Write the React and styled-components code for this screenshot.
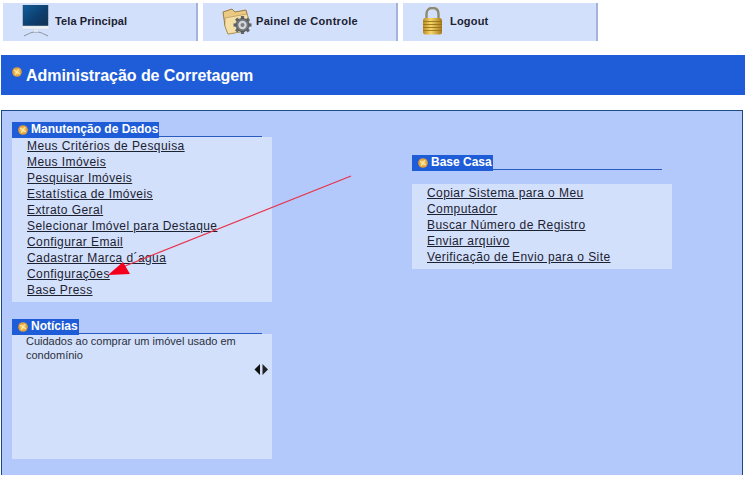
import React from 'react'
import styled, { createGlobalStyle } from 'styled-components'

const GlobalStyle = createGlobalStyle`
  html, body {
    margin: 0;
    padding: 0;
    background: #fff;
    font-family: "Liberation Sans", Arial, sans-serif;
  }
`

const Page = styled.div`
  position: relative;
  width: 747px;
  height: 477px;
  overflow: hidden;
  padding-top: 3px;
  box-sizing: border-box;
`

const Nav = styled.nav`
  display: flex;
  gap: 5px;
  padding-left: 3px;
  height: 38px;
`

const Tab = styled.a`
  display: flex;
  align-items: center;
  box-sizing: border-box;
  width: 195px;
  height: 38px;
  padding: 0 0 2px ${p => p.$pad}px;
  gap: ${p => p.$gap}px;
  background: #d3e0fb;
  border-right: 2px solid #a3b3dc;
  color: #1c2230;
  font-size: 11px;
  font-weight: bold;
  letter-spacing: ${p => p.$spacing || 0.2}px;
`

const Banner = styled.h1`
  display: flex;
  align-items: center;
  box-sizing: border-box;
  margin: 14px 0 0 1px;
  width: 744px;
  height: 40px;
  padding: 1px 0 0 11px;
  background: #1f5dd8;
  color: #fff;
  font-size: 16px;
  font-weight: bold;
  letter-spacing: -0.05px;
  gap: 4px;

  svg {
    margin-top: -7px;
  }
`

const Panel = styled.main`
  display: flex;
  box-sizing: border-box;
  margin: 15px 0 0 1px;
  width: 742px;
  height: 365px;
  padding: 10px 0 0 10px;
  gap: 140px;
  background: #b3c9fb;
  border: 1px solid #1b4a86;
  border-bottom: 0;
`

const Column = styled.div`
  width: 260px;
  padding-top: ${p => p.$top || 0}px;
`

const Section = styled.section`
  margin-bottom: 16px;
`

const Heading = styled.div`
  width: 250px;
  height: 16px;
  border-bottom: 1px solid #2a5bc0;
  box-sizing: border-box;
`

const HeadingLabel = styled.h2`
  display: inline-flex;
  align-items: center;
  gap: 3px;
  box-sizing: border-box;
  margin: 0;
  height: 16px;
  padding: 0 1px 2px 6px;
  background: #1f5dd8;
  color: #fff;
  font-size: 12px;
  font-weight: bold;
  white-space: nowrap;

  svg {
    margin-top: 2px;
  }
`

const Box = styled.div`
  box-sizing: border-box;
  width: 260px;
  height: ${p => p.$height}px;
  margin-top: ${p => p.$gap || 0}px;
  background: #d3e0fb;
`

const LinkList = styled.ul`
  list-style: none;
  margin: 0;
  padding: 1px 0 0 15px;
`

const Item = styled.li`
  height: 16px;
  line-height: 16px;
  font-size: 12px;
  letter-spacing: 0.42px;
  color: #1c2230;
  text-decoration: underline;
  white-space: nowrap;
`

const NewsBox = styled(Box)`
  display: flex;
  flex-direction: column;
  padding: 0 14px;
`

const NewsText = styled.p`
  margin: 0;
  font-size: 11px;
  line-height: 14px;
  color: #2a3040;
`

const Pager = styled.div`
  align-self: flex-end;
  margin: 2px -11px 0 0;
  height: 12px;
  line-height: 0;
`

const Annotation = styled.svg`
  position: absolute;
  left: 0;
  top: 0;
  pointer-events: none;
`

const Bullet = ({ size = 10 }) => (
  <svg width={size} height={size} viewBox="0 0 10 10">
    <circle cx="5" cy="5" r="4.8" fill="#e3a03c" />
    <circle cx="5" cy="5" r="2.8" fill="#f6c860" />
    <path d="M2 3 L8 7 M7 2 L3 8" stroke="#fff0b8" strokeWidth="0.9" />
  </svg>
)

const Monitor = () => (
  <svg width="28" height="32" viewBox="0 0 28 32">
    <defs>
      <linearGradient id="scr" x1="0" y1="0" x2="1" y2="1">
        <stop offset="0" stopColor="#0f5e9c" />
        <stop offset="0.55" stopColor="#0d3f70" />
        <stop offset="1" stopColor="#123050" />
      </linearGradient>
    </defs>
    <rect x="1" y="0" width="25" height="21" fill="url(#scr)" stroke="#2a4050" strokeWidth="0.5" />
    <rect x="0" y="21" width="27" height="3" fill="#eef2f6" stroke="#c8d0d8" strokeWidth="0.5" />
    <path d="M2 31 C8 28 10 27 14 27 C18 27 20 28 26 31" fill="none" stroke="#8a909c" strokeWidth="1" />
    <path d="M12 24 H16 V27 H12 Z" fill="#dfe5ea" />
  </svg>
)

const gearTeeth = [0, 45, 90, 135, 180, 225, 270, 315]

const FolderGear = () => (
  <svg width="31" height="27" viewBox="0 0 31 27">
    <path d="M1 4 L10 1 L13 4 L24 2 L27 13 L23 23 L6 26 L3 18 Z" fill="#ecc982" stroke="#8d7038" strokeWidth="0.9" />
    <path d="M3 10 L25 6 L27 13 L23 23 L6 26 L3 18 Z" fill="#f6dfa6" stroke="#a48a4c" strokeWidth="0.6" />
    <g transform="translate(20.5 17)">
      {gearTeeth.map(a => (
        <rect key={a} x="-1.6" y="-9" width="3.2" height="3.5" fill="#62666a" transform={`rotate(${a})`} />
      ))}
      <circle r="6.6" fill="#74787c" stroke="#44474c" strokeWidth="0.7" />
      <circle r="4.2" fill="#d4d7da" />
      <circle r="2" fill="#7c8084" />
    </g>
  </svg>
)

const Padlock = () => (
  <svg width="21" height="28" viewBox="0 0 21 28">
    <defs>
      <linearGradient id="brass" x1="0" y1="0" x2="1" y2="0">
        <stop offset="0" stopColor="#b98a22" />
        <stop offset="0.4" stopColor="#f6d668" />
        <stop offset="1" stopColor="#a87a1c" />
      </linearGradient>
    </defs>
    <path d="M4.5 13 V7 C4.5 3 7 1 10.5 1 C14 1 16.5 3 16.5 7 V13" fill="none" stroke="#8e8a70" strokeWidth="2.4" />
    <rect x="1" y="11" width="19" height="16.5" rx="2.5" fill="url(#brass)" />
    <path d="M1 14.5 H20 M1 17.5 H20 M1 20.5 H20 M1 23.5 H20" stroke="#9a7218" strokeWidth="0.9" />
  </svg>
)

const PagerArrows = () => (
  <svg width="15" height="12" viewBox="0 0 15 12">
    <path d="M6 0 V11 L0.5 5.5 Z" fill="#111" />
    <path d="M8.5 0 V11 L14 5.5 Z" fill="#222" />
  </svg>
)

const maintenanceLinks = [
  'Meus Critérios de Pesquisa',
  'Meus Imóveis',
  'Pesquisar Imóveis',
  'Estatística de Imóveis',
  'Extrato Geral',
  'Selecionar Imóvel para Destaque',
  'Configurar Email',
  'Cadastrar Marca d´agua',
  'Configurações',
  'Base Press',
]

const baseCasaLinks = [
  'Copiar Sistema para o Meu',
  'Computador',
  'Buscar Número de Registro',
  'Enviar arquivo',
  'Verificação de Envio para o Site',
]

const Title = ({ children }) => (
  <Heading>
    <HeadingLabel>
      <Bullet />
      {children}
    </HeadingLabel>
  </Heading>
)

const App = () => {
  return (
    <Page>
      <GlobalStyle />
      <Nav>
        <Tab $pad={19} $gap={5} $spacing={0.1}><Monitor />Tela Principal</Tab>
        <Tab $pad={19} $gap={3} $spacing={0.3}><FolderGear />Painel de Controle</Tab>
        <Tab $pad={19} $gap={7}><Padlock />Logout</Tab>
      </Nav>

      <Banner><Bullet />Administração de Corretagem</Banner>

      <Panel>
        <Column>
          <Section>
            <Title>Manutenção de Dados</Title>
            <Box $height={165}>
              <LinkList>
                {maintenanceLinks.map(l => <Item key={l}>{l}</Item>)}
              </LinkList>
            </Box>
          </Section>
          <Section>
            <Title>Notícias</Title>
            <NewsBox $height={125}>
              <NewsText>Cuidados ao comprar um imóvel usado em condomínio</NewsText>
              <Pager><PagerArrows /></Pager>
            </NewsBox>
          </Section>
        </Column>
        <Column $top={33}>
          <Title>Base Casa</Title>
          <Box $height={85} $gap={14}>
            <LinkList>
              {baseCasaLinks.map(l => <Item key={l}>{l}</Item>)}
            </LinkList>
          </Box>
        </Column>
      </Panel>

      <Annotation width="747" height="477" viewBox="0 0 747 477">
        <line x1="351" y1="176" x2="120" y2="268" stroke="#e8324a" strokeWidth="1.2" />
        <polygon points="108,275 123,262 130,274" fill="#f4001c" />
      </Annotation>
    </Page>
  )
}

export default App
